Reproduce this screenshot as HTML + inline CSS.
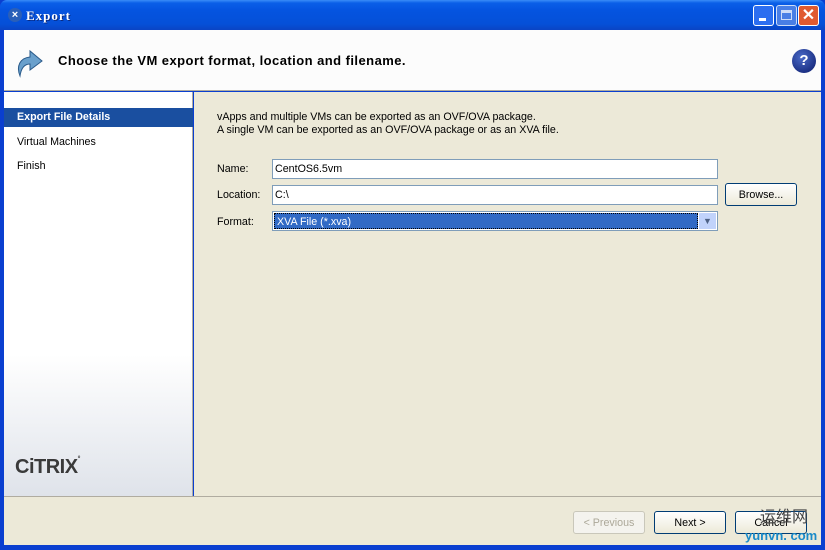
<!DOCTYPE html>
<html><head><style>
*{margin:0;padding:0;box-sizing:border-box}
body{width:825px;height:550px;overflow:hidden;font-family:Tahoma,"Liberation Sans",sans-serif;font-size:10.7px;background:#0a3fd0;position:relative}
.abs{position:absolute}
.tb{left:0;top:0;width:825px;height:30px;background:linear-gradient(#3a8cf8 0,#0a5fe8 3px,#0554e0 10px,#0550d8 24px,#0a44c4 30px);border-radius:7px 7px 0 0}
.title{left:26px;top:8px;color:#fff;font:bold 13px "Liberation Serif",serif;letter-spacing:1px;text-shadow:1px 1px #0a2a80}
.wb{width:21px;height:21px;top:5px;border:1px solid #fff;border-radius:3px}
.hdr{left:4px;top:30px;width:817px;height:61px;background:#fcfcfc;border-bottom:1px solid #b0aca0}
.h1{left:58px;top:53px;font:bold 13px "Liberation Sans",sans-serif;letter-spacing:0.45px;color:#000}
.left{left:4px;top:92px;width:189px;height:404px;background:linear-gradient(#fff 0,#fff 65%,#dfe3ea 100%);border-right:1px solid #b0aca0}
.right{left:194px;top:92px;width:627px;height:404px;background:#ece9d8}
.bot{left:4px;top:496px;width:817px;height:49px;background:#ece9d8;border-top:1px solid #b0aca0}
.sel{left:4px;top:108px;width:189px;height:19px;background:#1a4fa0;color:#fff;font-weight:bold;padding:3px 0 0 13px}
.it{left:17px;color:#000}
.lbl{left:217px;color:#000}
.inp{left:272px;width:446px;height:20px;background:#fff;border:1px solid #7f9db9;padding:3px 0 0 2px}
.btn{height:23px;width:72px;border:1px solid #003c74;border-radius:3px;background:linear-gradient(#fff,#ece9d8);text-align:center;padding-top:5px}
</style></head><body>
<div class="abs tb"></div>
<div class="abs" style="left:8px;top:8px;width:14px;height:14px;border-radius:50%;background:#2a5fb8;color:#fff;font-size:11px;font-weight:bold;text-align:center;line-height:14px">×</div>
<div class="abs title">Export</div>
<div class="abs wb" style="left:753px;background:#2c6ef0"><div style="position:absolute;left:5px;top:12px;width:7px;height:3px;background:#fff"></div></div>
<div class="abs wb" style="left:776px;background:#5a8ae8;opacity:.8"><div style="position:absolute;left:4px;top:4px;width:11px;height:10px;border:1px solid #fff;border-top-width:3px"></div></div>
<div class="abs wb" style="left:798px;background:#e05a30;color:#fff;font-size:16px;font-weight:bold;text-align:center;line-height:19px">✕</div>
<div class="abs hdr"></div>
<svg class="abs" style="left:14px;top:44px" width="30" height="34" viewBox="0 0 30 34"><path d="M6 32 C2 22 6 14 16 13 L16 7 L28 17 L16 26 L16 20 C10 20 7 25 6 32Z" fill="#6aa0cc" stroke="#2a5a8a" stroke-width="1"/></svg>
<div class="abs h1">Choose the VM export format, location and filename.</div>
<div class="abs" style="left:792px;top:49px;width:24px;height:24px;border-radius:50%;background:radial-gradient(circle at 40% 35%,#4a6ac8,#0a1a6a);color:#fff;font:bold 15px 'Liberation Sans';text-align:center;line-height:24px">?</div>
<div class="abs left"></div>
<div class="abs right"></div>
<div class="abs sel">Export File Details</div>
<div class="abs it" style="top:136px">Virtual Machines</div>
<div class="abs it" style="top:160px">Finish</div>
<div class="abs" style="left:15px;top:456px;font:bold 20px 'Liberation Sans',sans-serif;color:#3a3a3a;letter-spacing:-0.5px">CiTRIX<span style="font-size:7px;vertical-align:top">°</span></div>
<div class="abs" style="left:217px;top:111px;line-height:13px">vApps and multiple VMs can be exported as an OVF/OVA package.<br>A single VM can be exported as an OVF/OVA package or as an XVA file.</div>
<div class="abs lbl" style="top:163px">Name:</div>
<div class="abs lbl" style="top:189px">Location:</div>
<div class="abs lbl" style="top:216px">Format:</div>
<div class="abs inp" style="top:159px">CentOS6.5vm</div>
<div class="abs inp" style="top:185px;width:446px">C:\</div>
<div class="abs btn" style="left:725px;top:183px">Browse...</div>
<div class="abs inp" style="top:211px;padding:1px"><div style="background:#316ac5;color:#fff;width:424px;height:16px;border:1px dotted #000;padding:2px 0 0 2px">XVA File (*.xva)</div><div style="position:absolute;right:1px;top:1px;width:17px;height:16px;background:#c1d3fb;color:#4d6185;text-align:center;font-size:9px;line-height:16px">▼</div></div>
<div class="abs bot"></div>
<div class="abs btn" style="left:573px;top:511px;border-color:#c9c7ba;color:#aca899;background:#f4f3ee">&lt; Previous</div>
<div class="abs btn" style="left:654px;top:511px">Next &gt;</div>
<div class="abs btn" style="left:735px;top:511px">Cancel</div>
<div class="abs" style="left:760px;top:503px;color:#444;font-size:16px;font-family:'Noto Sans CJK SC',sans-serif">运维网</div>
<div class="abs" style="left:745px;top:528px;color:#1a8ac8;font:bold 13px 'Liberation Sans',sans-serif">yunvn. com</div>
</body></html>
